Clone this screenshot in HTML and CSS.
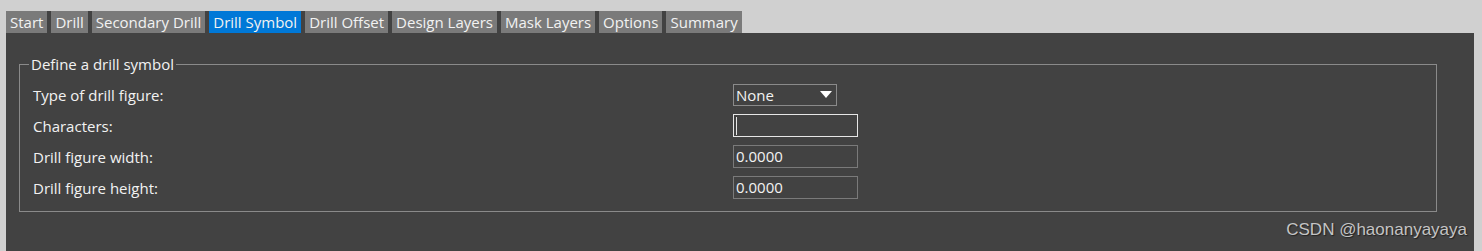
FILE: index.html
```html
<!DOCTYPE html>
<html>
<head>
<meta charset="utf-8">
<link rel="stylesheet" href="styles.css">
</head>
<body>
<div class="window">
  <div class="tabs">
    <div class="tab">Start</div>
    <div class="tab">Drill</div>
    <div class="tab">Secondary Drill</div>
    <div class="tab active">Drill Symbol</div>
    <div class="tab">Drill Offset</div>
    <div class="tab">Design Layers</div>
    <div class="tab">Mask Layers</div>
    <div class="tab">Options</div>
    <div class="tab">Summary</div>
  </div>
  <div class="panel">
    <fieldset class="group">
      <legend class="legend">Define a drill symbol</legend>
      <div class="rows">
        <div class="label">Type of drill figure:</div>
        <div class="cell"><div class="select"><span>None</span><svg class="arrow" width="12" height="8" viewBox="0 0 12 8"><polygon points="0,0 12,0 6,7" fill="#ffffff"/></svg></div></div>
        <div class="label">Characters:</div>
        <div class="cell"><div class="input focused"><span class="caret"></span></div></div>
        <div class="label">Drill figure width:</div>
        <div class="cell"><div class="input">0.0000</div></div>
        <div class="label">Drill figure height:</div>
        <div class="cell"><div class="input">0.0000</div></div>
      </div>
    </fieldset>
  </div>
</div>
<div class="watermark">CSDN @haonanyayaya</div>
</body>
</html>
```

FILE: styles.css
```css
html, body {
  margin: 0;
  padding: 0;
}
body {
  background: #d0d0d0;
  width: 1482px;
  height: 251px;
  overflow: hidden;
  position: relative;
  font-family: "Open Sans", "Noto Sans", sans-serif;
  color: #f2f2f2;
}
.window {
  margin: 11px 8px 0 6px;
  height: 240px;
  display: flex;
  flex-direction: column;
}
.tabs {
  display: flex;
  gap: 4px;
  background: #424242;
  align-self: flex-start;
}
.tab {
  height: 22px;
  line-height: 22px;
  padding: 0 4px;
  background: #7a7a7a;
  font-size: 15px;
  color: #f2f2f2;
  white-space: nowrap;
}
.tab.active {
  background: #0078d7;
}
.panel {
  flex: 1;
  background: #424242;
  padding: 21px 37px 0 13px;
}
.group {
  margin: 0;
  border: 1px solid #8a8a8a;
  padding: 0 0 8px 13px;
  min-width: 0;
}
.legend {
  font-size: 15px;
  padding: 0 2px;
  margin-left: -4px;
  line-height: 20px;
}
.rows {
  display: grid;
  grid-template-columns: 700px auto;
  grid-auto-rows: 31px;
  align-items: center;
  margin-top: 5px;
}
.label {
  font-size: 15px;
}
.cell {
  display: flex;
  align-items: center;
}
.select {
  height: 20px;
  border: 1px solid #8a8a8a;
  display: flex;
  align-items: center;
  justify-content: space-between;
  padding: 0 4px 0 2px;
  box-sizing: content-box;
  width: 96px;
  font-size: 15px;
}
.arrow {
  display: block;
}
.input {
  width: 121px;
  height: 21px;
  border: 1px solid #7a7a7a;
  font-size: 15px;
  line-height: 21px;
  padding-left: 2px;
  display: flex;
  align-items: center;
}
.input.focused {
  border-color: #e6e6e6;
}
.caret {
  width: 1px;
  height: 18px;
  background: #e6e6e6;
}
.watermark {
  position: absolute;
  right: 15px;
  top: 220px;
  font-family: "Liberation Sans", Arial, sans-serif;
  font-size: 17px;
  color: #c4c4c4;
  text-shadow: 1px 1px 1px #222;
}
```
